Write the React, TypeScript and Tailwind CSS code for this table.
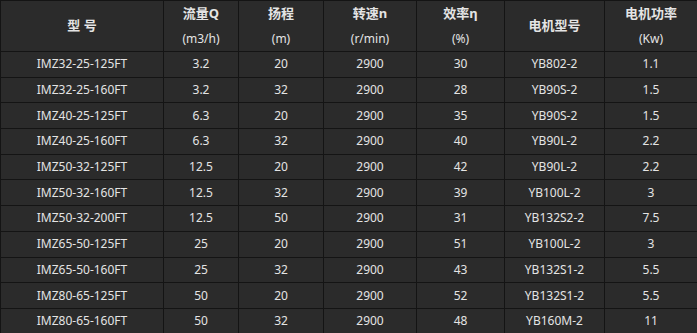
const rows: string[][] = [
  ["IMZ32-25-125FT", "3.2", "20", "2900", "30", "YB802-2", "1.1"],
  ["IMZ32-25-160FT", "3.2", "32", "2900", "28", "YB90S-2", "1.5"],
  ["IMZ40-25-125FT", "6.3", "20", "2900", "35", "YB90S-2", "1.5"],
  ["IMZ40-25-160FT", "6.3", "32", "2900", "40", "YB90L-2", "2.2"],
  ["IMZ50-32-125FT", "12.5", "20", "2900", "42", "YB90L-2", "2.2"],
  ["IMZ50-32-160FT", "12.5", "32", "2900", "39", "YB100L-2", "3"],
  ["IMZ50-32-200FT", "12.5", "50", "2900", "31", "YB132S2-2", "7.5"],
  ["IMZ65-50-125FT", "25", "20", "2900", "51", "YB100L-2", "3"],
  ["IMZ65-50-160FT", "25", "32", "2900", "43", "YB132S1-2", "5.5"],
  ["IMZ80-65-125FT", "50", "20", "2900", "52", "YB132S1-2", "5.5"],
  ["IMZ80-65-160FT", "50", "32", "2900", "48", "YB160M-2", "11"],
];

const widths = ["w-[163px]", "w-[75px]", "w-[85px]", "w-[93px]", "w-[88px]", "w-[100px]", "w-[93px]"];

export default function App() {
  return (
    <div className="w-[697px] h-[333px] overflow-hidden bg-[#2b2b2b] text-[#e4e4e4] font-['Noto_Sans','Noto_Sans_CJK_SC',sans-serif] text-[12px]">
      <table className="w-[697px] border-collapse table-fixed">
        <colgroup>
          {widths.map((w, i) => (
            <col key={i} className={w} />
          ))}
        </colgroup>
        <thead>
          <tr className="h-[51px] font-bold text-[13px]">
            <th className="border border-[#141414] font-bold">型 号</th>
            <th className="border border-[#141414] font-bold leading-[25px]">
              流量Q<br />
              <span className="font-normal text-[12px]">(m3/h)</span>
            </th>
            <th className="border border-[#141414] font-bold leading-[25px]">
              扬程<br />
              <span className="font-normal text-[12px]">(m)</span>
            </th>
            <th className="border border-[#141414] font-bold leading-[25px]">
              转速n<br />
              <span className="font-normal text-[12px]">(r/min)</span>
            </th>
            <th className="border border-[#141414] font-bold leading-[25px]">
              效率η<br />
              <span className="font-normal text-[12px]">(%)</span>
            </th>
            <th className="border border-[#141414] font-bold">电机型号</th>
            <th className="border border-[#141414] font-bold leading-[25px]">
              电机功率<br />
              <span className="font-normal text-[12px]">(Kw)</span>
            </th>
          </tr>
        </thead>
        <tbody>
          {rows.map((r) => (
            <tr key={r[0]} className="h-[25.7px]">
              {r.map((c, i) => (
                <td key={i} className="border border-[#141414] text-center p-0 leading-none">
                  {c}
                </td>
              ))}
            </tr>
          ))}
        </tbody>
      </table>
    </div>
  );
}
